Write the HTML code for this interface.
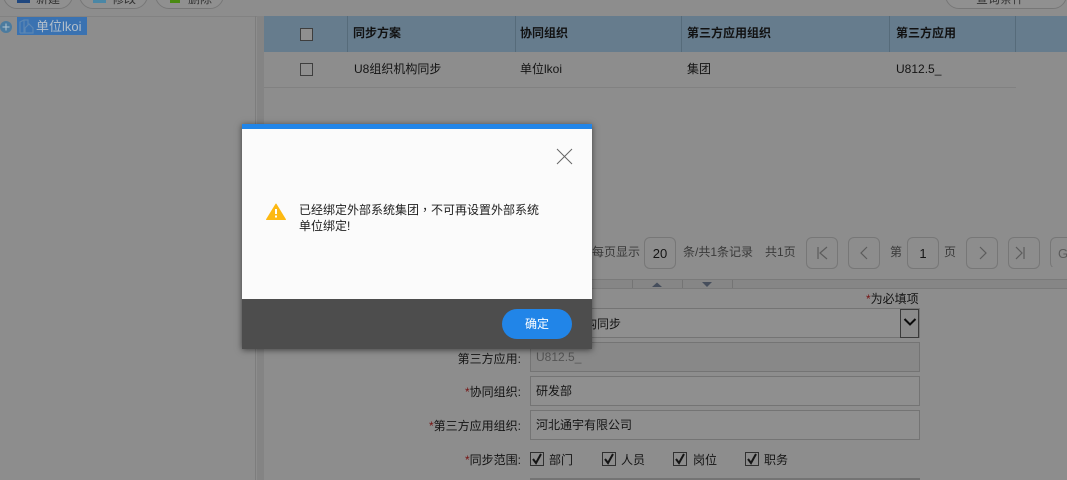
<!DOCTYPE html>
<html><head><meta charset="utf-8"><style>
html,body{margin:0;padding:0;width:1067px;height:480px;overflow:hidden}
#w{width:1067px;height:480px;overflow:hidden;position:relative;background:#8d8d8d;font-family:"Liberation Sans","Noto Sans CJK SC",sans-serif;font-size:12px;color:#141414}
.a,.t{position:absolute}
.t{white-space:nowrap;line-height:16px}
.b{font-weight:bold}
.pill{position:absolute;top:-20px;height:27px;border:1px solid #777;border-radius:14px;background:#909090}
.v{position:absolute;top:16px;width:1px;height:36px;background:#566b7a}
.cb{position:absolute;width:11px;height:11px;border:1px solid #3e3e3e;background:#8f8f8f}
.pg{position:absolute;top:237px;width:30px;height:30px;border:1px solid #777;border-radius:6px;text-align:center;line-height:32px;color:#5c5c5c;font-size:13px}
.in{position:absolute;left:530px;width:388px;height:28px;border:1px solid #747474;background:#8f8f8f;line-height:29px;text-indent:5px}
.r{position:absolute;right:546px;white-space:nowrap;line-height:16px}
.r i{color:#761313;font-style:normal}
.c{position:absolute;top:452px;width:12px;height:12px;border:1px solid #303030}
</style></head><body><div id="w">
<div class="pill" style="left:3px;width:68px"></div>
<div class="a" style="left:17px;top:0;width:13px;height:3px;background:#1f477f"></div>
<div class="t" style="left:36px;top:-9px;color:#333">新建</div>
<div class="pill" style="left:79px;width:67px"></div>
<div class="a" style="left:93px;top:0;width:13px;height:3px;background:#4a87a6"></div>
<div class="t" style="left:112px;top:-9px;color:#333">修改</div>
<div class="pill" style="left:155px;width:67px"></div>
<div class="a" style="left:170px;top:0;width:10px;height:3px;background:#4a8a12"></div>
<div class="t" style="left:188px;top:-9px;color:#333">删除</div>
<div class="pill" style="left:945px;width:120px"></div>
<div class="t" style="left:976px;top:-9px;color:#333">查询条件</div>

<div class="a" style="left:0;top:16px;width:1067px;height:1px;background:#828282"></div>
<div class="a" style="left:255px;top:16px;width:1px;height:464px;background:#7d7d7d"></div>
<div class="a" style="left:257px;top:16px;width:7px;height:464px;background:#848484"></div>

<div class="a" style="left:0;top:21px;width:12px;height:12px;border-radius:50%;background:#4b7b9f"></div>
<svg class="a" style="left:0;top:21px" width="12" height="12"><path d="M2.5 6H9.5M6 2.5V9.5" stroke="#b5c4cf" stroke-width="1"/></svg>
<div class="a" style="left:17px;top:17px;width:70px;height:18px;background:#3a72b1"></div>
<svg class="a" style="left:19px;top:19px" width="15" height="15"><path d="M1 14V3L5 1H9V6M5 1V14H1M6 14V9L10 5L14 9V14Z" fill="none" stroke="#5b86b3" stroke-width="1.2"/></svg>
<div class="t" style="left:36px;top:19px;font-size:13px;color:#b3bfca">单位lkoi</div>

<div class="a" style="left:264px;top:16px;width:803px;height:36px;background:#667c8d"></div>
<div class="v" style="left:347px"></div><div class="v" style="left:515px"></div><div class="v" style="left:681px"></div><div class="v" style="left:889px"></div><div class="v" style="left:1015px"></div>
<div class="cb" style="left:300px;top:28px"></div>
<div class="t b" style="left:353px;top:25px;color:#111">同步方案</div>
<div class="t b" style="left:520px;top:25px;color:#111">协同组织</div>
<div class="t b" style="left:687px;top:25px;color:#111">第三方应用组织</div>
<div class="t b" style="left:896px;top:25px;color:#111">第三方应用</div>
<div class="cb" style="left:300px;top:63px"></div>
<div class="t" style="left:354px;top:61px">U8组织机构同步</div>
<div class="t" style="left:520px;top:61px">单位lkoi</div>
<div class="t" style="left:687px;top:61px">集团</div>
<div class="t" style="left:896px;top:61px">U812.5_</div>
<div class="a" style="left:264px;top:87px;width:752px;height:1px;background:#818181"></div>

<div class="t" style="left:592px;top:244px;color:#3a3a3a">每页显示</div>
<div class="pg" style="left:644px;color:#151515">20</div>
<div class="t" style="left:683px;top:244px;color:#3a3a3a">条/共1条记录</div>
<div class="t" style="left:765px;top:244px;color:#3a3a3a">共1页</div>
<div class="pg" style="left:806px"></div>
<div class="pg" style="left:848px"></div>
<svg class="a" style="left:806px;top:237px" width="84" height="32" fill="none" stroke="#5c5c5c" stroke-width="1.2"><path d="M12 10V22M21 10L14 16L21 22M61 10L55 16L61 22"/></svg>
<div class="t" style="left:890px;top:244px;color:#3a3a3a">第</div>
<div class="pg" style="left:907px;color:#151515">1</div>
<div class="t" style="left:944px;top:244px;color:#3a3a3a">页</div>
<div class="pg" style="left:966px"></div>
<div class="pg" style="left:1008px"></div>
<svg class="a" style="left:966px;top:237px" width="70" height="32" fill="none" stroke="#5c5c5c" stroke-width="1.2"><path d="M14 10L20 16L14 22M50 10L56 16L50 22M58 10V22"/></svg>
<div class="a" style="left:1050px;top:237px;width:17px;height:30px;overflow:hidden"><div class="pg" style="left:0;top:0;text-align:left;text-indent:7px">G</div></div>

<div class="a" style="left:264px;top:279px;width:803px;height:10px;background:#868686;border-top:1px solid #7a7a7a;border-bottom:1px solid #7a7a7a;box-sizing:border-box"></div>
<div class="a" style="left:632px;top:280px;width:1px;height:8px;background:#747474"></div>
<div class="a" style="left:682px;top:280px;width:1px;height:8px;background:#747474"></div>
<div class="a" style="left:732px;top:280px;width:1px;height:8px;background:#747474"></div>
<svg class="a" style="left:650px;top:281px" width="66" height="7"><path d="M2 6L7 1.5L12 6Z" fill="#464e5c"/><path d="M52 1H62L57 6Z" fill="#464e5c"/></svg>

<div class="t" style="left:866px;top:291px"><span style="color:#761313">*</span>为必填项</div>

<div class="in" style="top:308px"></div>
<div class="t" style="left:585px;top:316px">构同步</div>
<div class="a" style="left:900px;top:309px;width:17px;height:27px;border:1px solid #3a3a3a;background:#8b8b8b"></div>
<svg class="a" style="left:903px;top:316px" width="14" height="12"><path d="M1.5 3L7 8.5L12.5 3" fill="none" stroke="#0c0c0c" stroke-width="2"/></svg>

<div class="r" style="top:351px">第三方应用:</div>
<div class="in" style="top:342px;background:#888;color:#555">U812.5_</div>
<div class="r" style="top:384px"><i>*</i>协同组织:</div>
<div class="in" style="top:376px">研发部</div>
<div class="r" style="top:418px"><i>*</i>第三方应用组织:</div>
<div class="in" style="top:410px">河北通宇有限公司</div>
<div class="r" style="top:452px"><i>*</i>同步范围:</div>
<div class="c" style="left:530px"></div><div class="t" style="left:549px;top:452px">部门</div>
<div class="c" style="left:602px"></div><div class="t" style="left:621px;top:452px">人员</div>
<div class="c" style="left:673px"></div><div class="t" style="left:693px;top:452px">岗位</div>
<div class="c" style="left:745px"></div><div class="t" style="left:764px;top:452px">职务</div>
<svg class="a" style="left:530px;top:452px" width="240" height="14" fill="none" stroke="#151515" stroke-width="2"><path d="M3 7L6 11L11 2M75 7L78 11L83 2M146 7L149 11L154 2M218 7L221 11L226 2"/></svg>
<div class="a" style="left:530px;top:478px;width:390px;height:2px;background:#747474"></div>
<div class="a" style="left:900px;top:478px;width:20px;height:2px;background:#6f6f6f"></div>

<div class="a" style="left:242px;top:124px;width:350px;height:225px;background:#fbfbfb;box-shadow:0 1px 6px rgba(0,0,0,.55)">
<div class="a" style="left:0;top:0;width:350px;height:5px;background:#2185e8"></div>
<svg class="a" style="left:314px;top:24px" width="18" height="18"><path d="M1 1L16 16M16 1L1 16" stroke="#666" stroke-width="1" fill="none"/></svg>
<svg class="a" style="left:24px;top:79px" width="20" height="17"><path d="M10 1L19.5 16.5H0.5Z" fill="#fdb913" stroke="#fdb913" stroke-linejoin="round"/><path d="M10 6V11M10 12.5V14.5" stroke="#fff" stroke-width="2"/></svg>
<div class="t" style="left:57px;top:78px;color:#1e1e1e;line-height:16px">已经绑定外部系统集团<span style="font-family:'Noto Sans CJK TC',sans-serif">，</span>不可再设置外部系统<br>单位绑定!</div>
<div class="a" style="left:0;top:175px;width:350px;height:50px;background:#4d4d4d"></div>
<div class="a" style="left:260px;top:185px;width:70px;height:30px;border-radius:15px;background:#2185e8;color:#fff;text-align:center;line-height:31px">确定</div>
</div>
</div></body></html>
